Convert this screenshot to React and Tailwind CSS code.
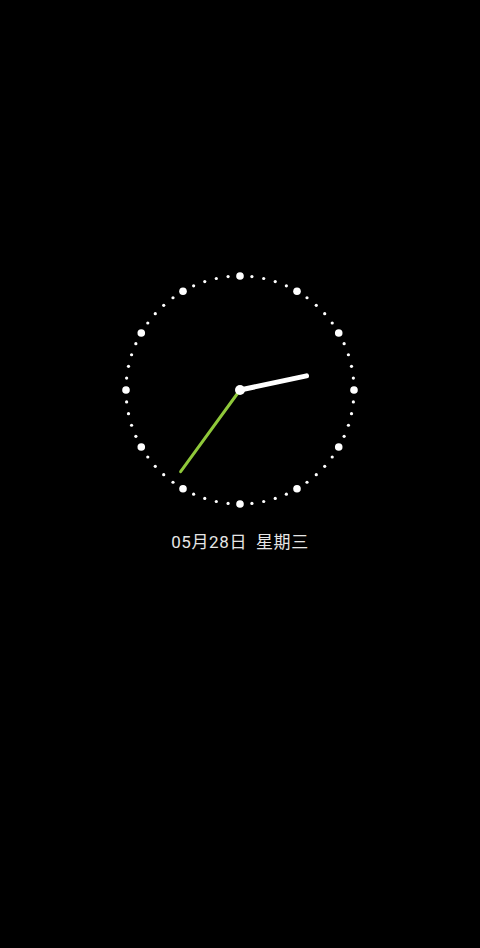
import React from 'react';

const CX = 120;
const CY = 120;
const R = 114;

const ClockFace = () => {
  const dots = Array.from({ length: 60 }, (_, i) => {
    const a = (i * 6 * Math.PI) / 180;
    const big = i % 5 === 0;
    return (
      <circle
        key={i}
        cx={CX + R * Math.sin(a)}
        cy={CY - R * Math.cos(a)}
        r={big ? 3.8 : 1.6}
        fill="#ffffff"
      />
    );
  });

  // 2:36
  const hourA = (78 * Math.PI) / 180;
  const minA = (216 * Math.PI) / 180;

  return (
    <svg width="240" height="240" viewBox="0 0 240 240">
      {dots}
      <line
        x1={CX}
        y1={CY}
        x2={CX + 101 * Math.sin(minA)}
        y2={CY - 101 * Math.cos(minA)}
        stroke="#8fc83a"
        strokeWidth="3"
        strokeLinecap="round"
      />
      <line
        x1={CX}
        y1={CY}
        x2={CX + 68 * Math.sin(hourA)}
        y2={CY - 68 * Math.cos(hourA)}
        stroke="#ffffff"
        strokeWidth="5"
        strokeLinecap="round"
      />
      <circle cx={CX} cy={CY} r="5" fill="#ffffff" />
    </svg>
  );
};

const App = () => {
  return (
    <div className="w-full min-h-[948px] bg-black flex flex-col items-center pt-[270px]">
      <ClockFace />
      <p
        className="mt-[20px] flex gap-[9px] text-[17px] leading-6 text-[#e6e6e6] tracking-[0.6px]"
        style={{ fontFamily: 'Roboto, "Noto Sans CJK SC", sans-serif' }}
      >
        <span>05月28日</span>
        <span>星期三</span>
      </p>
    </div>
  );
};

export default App;
